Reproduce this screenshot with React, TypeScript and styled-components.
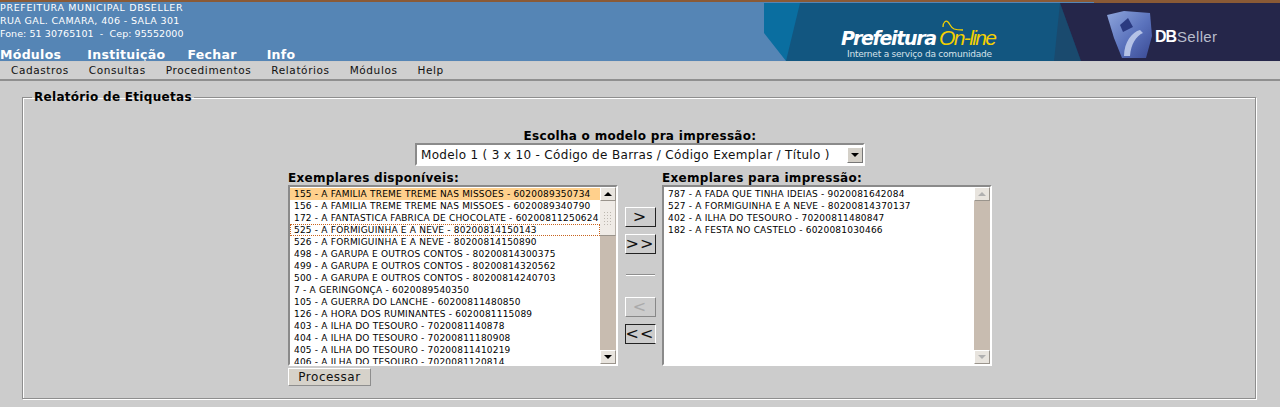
import React from 'react';
import styled, { createGlobalStyle } from 'styled-components';

const GlobalStyle = createGlobalStyle`
  html, body {
    margin: 0;
    padding: 0;
    background: #cccccc;
    font-family: "DejaVu Sans", Verdana, sans-serif;
    overflow: hidden;
  }
`;

const Page = styled.div`
  width: 1280px;
  height: 407px;
  overflow: hidden;
`;

const Header = styled.header`
  display: flex;
  justify-content: space-between;
  height: 61px;
  box-sizing: border-box;
  background: #5585b5;
  border-top: 2px solid #8a5a36;
  overflow: hidden;
`;

const Institution = styled.div`
  display: flex;
  flex-direction: column;
  margin-top: -1px;
`;

const InstitutionLine = styled.div<{ $spacing: number }>`
  color: #ffffff;
  font-size: 9.5px;
  line-height: 13px;
  letter-spacing: ${(p) => p.$spacing}px;
  white-space: pre;
`;

const MainNav = styled.nav`
  display: flex;
  gap: 25px;
  margin-top: 7px;
`;

const MainNavItem = styled.span<{ $extra?: number }>`
  margin-left: ${(p) => p.$extra ?? 0}px;
  color: #ffffff;
  font-size: 12.5px;
  font-weight: 700;
  line-height: 15px;
  letter-spacing: 0.3px;
`;

const Banner = styled.svg`
  display: block;
  flex: none;
  margin-top: -2px;
`;

const MenuBar = styled.nav`
  display: flex;
  gap: 20px;
  height: 16px;
  margin-top: 1px;
  padding: 0 0 1px 11px;
  background: #cfcfcf;
  border-bottom: 2px solid #8f8f8f;
  align-items: center;
`;

const MenuItem = styled.span`
  color: #111111;
  font-size: 10.5px;
  letter-spacing: 0.6px;
`;

const Content = styled.main`
  padding: 9px 24px 0 22px;
`;

const Frame = styled.fieldset`
  margin: 0;
  padding: 0;
  height: 309px;
  box-sizing: border-box;
  border: 1px solid #8e8e8e;
  box-shadow: inset 1px 1px 0 #ffffff, 1px 1px 0 #ffffff;
`;

const FrameTitle = styled.legend`
  margin-left: 9px;
  padding: 0 2px;
  color: #000000;
  font-size: 12px;
  font-weight: 700;
  letter-spacing: 0.3px;
`;

const Form = styled.form`
  display: flex;
  flex-direction: column;
  width: 704px;
  margin-left: 265px;
  padding-top: 25px;
`;

const ModelField = styled.div`
  display: flex;
  flex-direction: column;
  align-items: center;
`;

const FieldLabel = styled.label`
  color: #000000;
  font-size: 12px;
  font-weight: 700;
  line-height: 14px;
  letter-spacing: 0.3px;
`;

const ModelSelect = styled.div`
  display: flex;
  align-items: center;
  justify-content: space-between;
  width: 450px;
  height: 23px;
  box-sizing: border-box;
  padding: 0 0 0 4px;
  background: #ffffff;
  border: 2px solid #8a8a8a;
  border-right-color: #ffffff;
  border-bottom-color: #ffffff;
  color: #111111;
  font-size: 12px;
  letter-spacing: 0.33px;
`;

const ArrowButton = styled.span`
  display: flex;
  align-items: center;
  justify-content: center;
  width: 14px;
  height: 14px;
  background: #d4d0c8;
  border: 1px solid #777777;
  border-top-color: #ffffff;
  border-left-color: #ffffff;
`;

const ArrowDown = styled.i<{ $muted?: boolean }>`
  width: 0;
  height: 0;
  border-left: 4px solid transparent;
  border-right: 4px solid transparent;
  border-top: 4px solid ${(p) => (p.$muted ? '#b0b0b0' : '#000000')};
`;

const ArrowUp = styled.i<{ $muted?: boolean }>`
  width: 0;
  height: 0;
  border-left: 4px solid transparent;
  border-right: 4px solid transparent;
  border-bottom: 4px solid ${(p) => (p.$muted ? '#b0b0b0' : '#000000')};
`;

const Picker = styled.div`
  display: flex;
  margin-top: 5px;
`;

const ListColumn = styled.div`
  display: flex;
  flex-direction: column;
  width: 330px;
`;

const ListBox = styled.div`
  display: flex;
  height: 181px;
  box-sizing: border-box;
  background: #ffffff;
  border: 2px solid #8a8a8a;
  border-right-color: #ffffff;
  border-bottom-color: #ffffff;
  overflow: hidden;
`;

const Rows = styled.div`
  flex: 1;
  min-width: 0;
  padding-top: 1px;
  overflow: hidden;
`;

const Row = styled.div<{ $selected?: boolean; $focused?: boolean }>`
  height: 12px;
  box-sizing: border-box;
  padding-left: 4px;
  color: #000000;
  font-size: 9px;
  line-height: 12px;
  letter-spacing: 0.2px;
  white-space: nowrap;
  background: ${(p) => (p.$selected ? '#ffd08c' : 'transparent')};
  outline: ${(p) => (p.$focused ? '1px dotted #c8641e' : 'none')};
  outline-offset: -1px;
`;

const ScrollBar = styled.div`
  display: flex;
  flex-direction: column;
  flex: none;
  width: 16px;
  background: #c8bcb0;
`;

const ScrollButton = styled.div`
  display: flex;
  align-items: center;
  justify-content: center;
  height: 14px;
  box-sizing: border-box;
  background: #e8e4de;
  border: 1px solid #9a948c;
  border-top-color: #ffffff;
  border-left-color: #ffffff;
`;

const ScrollThumb = styled.div`
  display: flex;
  align-items: center;
  justify-content: center;
  height: 35px;
  box-sizing: border-box;
  background: #efebe6;
  border-bottom: 1px solid #9a948c;
  border-right: 1px solid #b8b2aa;
`;

const ThumbGrip = styled.div`
  width: 9px;
  height: 15px;
  background-image: radial-gradient(circle, #bdb8b0 1px, transparent 1px);
  background-size: 3px 3px;
`;

const ScrollTrack = styled.div`
  flex: 1;
`;

const Movers = styled.div`
  display: flex;
  flex-direction: column;
  align-items: center;
  width: 44px;
  padding-top: 36px;
`;

const MoveButton = styled.button<{ $top?: number; $pressed?: boolean }>`
  display: block;
  width: 31px;
  height: 20px;
  margin-top: ${(p) => p.$top ?? 0}px;
  padding: 0;
  background: #cccccc;
  border: 1px solid #222222;
  border-top-color: ${(p) => (p.$pressed ? '#222222' : '#ffffff')};
  border-left-color: ${(p) => (p.$pressed ? '#222222' : '#ffffff')};
  border-right-color: ${(p) => (p.$pressed ? '#ffffff' : '#222222')};
  color: #111111;
  font-family: inherit;
  font-size: 16px;
  line-height: 16px;
  letter-spacing: 1px;
  &:disabled {
    color: #aaaaaa;
    border-color: #ffffff #888888 #888888 #ffffff;
  }
`;

const MoverRule = styled.hr`
  width: 29px;
  height: 1px;
  margin: 20px 0 0;
  border: 0;
  background: #8e8e8e;
  box-shadow: 0 1px 0 #ffffff;
`;

const SubmitButton = styled.button`
  width: 83px;
  height: 18px;
  margin-top: 2px;
  padding: 0;
  background: #d6d2ca;
  border: 1px solid #8e8e8e;
  border-top-color: #ffffff;
  border-left-color: #ffffff;
  color: #111111;
  font-family: inherit;
  font-size: 12px;
  letter-spacing: 0.5px;
`;

const available = [
  '155 - A FAMILIA TREME TREME NAS MISSOES - 6020089350734',
  '156 - A FAMILIA TREME TREME NAS MISSOES - 6020089340790',
  '172 - A FANTASTICA FABRICA DE CHOCOLATE - 60200811250624',
  '525 - A FORMIGUINHA E A NEVE - 80200814150143',
  '526 - A FORMIGUINHA E A NEVE - 80200814150890',
  '498 - A GARUPA E OUTROS CONTOS - 80200814300375',
  '499 - A GARUPA E OUTROS CONTOS - 80200814320562',
  '500 - A GARUPA E OUTROS CONTOS - 80200814240703',
  '7 - A GERINGONÇA - 6020089540350',
  '105 - A GUERRA DO LANCHE - 60200811480850',
  '126 - A HORA DOS RUMINANTES - 6020081115089',
  '403 - A ILHA DO TESOURO - 7020081140878',
  '404 - A ILHA DO TESOURO - 70200811180908',
  '405 - A ILHA DO TESOURO - 70200811410219',
  '406 - A ILHA DO TESOURO - 7020081120814',
];

const chosen = [
  '787 - A FADA QUE TINHA IDEIAS - 9020081642084',
  '527 - A FORMIGUINHA E A NEVE - 80200814370137',
  '402 - A ILHA DO TESOURO - 70200811480847',
  '182 - A FESTA NO CASTELO - 6020081030466',
];

const BannerArt = () => (
  <Banner width={516} height={61} viewBox="0 0 516 61">
    <defs>
      <linearGradient id="dbCube" x1="0" y1="0" x2="1" y2="1">
        <stop offset="0" stopColor="#8fa6dc" />
        <stop offset="0.55" stopColor="#5a72bc" />
        <stop offset="1" stopColor="#3a4a94" />
      </linearGradient>
    </defs>
    <rect x="0" y="0" width="516" height="61" fill="#125680" />
    <polygon points="0,3 36,3 22,61 0,61" fill="#0a6ea0" />
    <polygon points="0,3 0,33 22,61 0,61" fill="#5585b5" />
    <polygon points="296,3 290,61 317,61" fill="#1a4a6e" />
    <polygon points="296,3 516,3 516,61 317,61" fill="#25264a" />
    <rect x="0" y="0" width="330" height="3" fill="#5585b5" />
    <rect x="330" y="0" width="186" height="3" fill="#8a5a36" />
    <text x="77" y="45" fontFamily="'DejaVu Sans', sans-serif" fontSize="19" fontWeight="700" fontStyle="italic" fill="#ffffff" textLength="96">
      Prefeitura
    </text>
    <text x="175" y="45" fontFamily="'Liberation Sans', sans-serif" fontSize="21" fontStyle="italic" fill="#f4d000" textLength="58">
      On-line
    </text>
    <path d="M179 27 c0 -5 3 -7 5 -5 c2 2 3 6 6 7 c3 1 6 1 9 1" fill="none" stroke="#f4d000" strokeWidth="1.3" />
    <text x="83" y="57" fontFamily="'DejaVu Sans', sans-serif" fontSize="9" fill="#d6e2ea" textLength="145">
      Internet a serviço da comunidade
    </text>
    <polygon points="343,15 360,11 386,13 388,36 382,58 358,58 350,38" fill="url(#dbCube)" />
    <polygon points="356,25 364,18 369,27 359,32" fill="#2a3a80" />
    <path d="M360 56 c0 -14 8 -24 16 -26 l3 3 c-7 3 -12 11 -13 23 z" fill="#b4c2e6" />
    <text x="391" y="42" fontFamily="'Liberation Sans', sans-serif" fontSize="16" fontWeight="700" fill="#ffffff" textLength="22">
      DB
    </text>
    <text x="413" y="42" fontFamily="'Liberation Sans', sans-serif" fontSize="15" fill="#b8bccc" textLength="40">
      Seller
    </text>
  </Banner>
);

const App = (): JSX.Element => {
  return (
    <Page>
      <GlobalStyle />
      <Header>
        <Institution>
          <InstitutionLine $spacing={0.65}>PREFEITURA MUNICIPAL DBSELLER</InstitutionLine>
          <InstitutionLine $spacing={0.37}>RUA GAL. CAMARA, 406 - SALA 301</InstitutionLine>
          <InstitutionLine $spacing={0.07}>{'Fone: 51 30765101  -  Cep: 95552000'}</InstitutionLine>
          <MainNav>
            <MainNavItem>Módulos</MainNavItem>
            <MainNavItem $extra={1}>Instituição</MainNavItem>
            <MainNavItem $extra={-3}>Fechar</MainNavItem>
            <MainNavItem $extra={5}>Info</MainNavItem>
          </MainNav>
        </Institution>
        <BannerArt />
      </Header>
      <MenuBar>
        <MenuItem>Cadastros</MenuItem>
        <MenuItem>Consultas</MenuItem>
        <MenuItem>Procedimentos</MenuItem>
        <MenuItem>Relatórios</MenuItem>
        <MenuItem>Módulos</MenuItem>
        <MenuItem>Help</MenuItem>
      </MenuBar>
      <Content>
        <Frame>
          <FrameTitle>Relatório de Etiquetas</FrameTitle>
          <Form>
            <ModelField>
              <FieldLabel>Escolha o modelo pra impressão:</FieldLabel>
              <ModelSelect>
                Modelo 1 ( 3 x 10 - Código de Barras / Código Exemplar / Título )
                <ArrowButton>
                  <ArrowDown />
                </ArrowButton>
              </ModelSelect>
            </ModelField>
            <Picker>
              <ListColumn>
                <FieldLabel>Exemplares disponíveis:</FieldLabel>
                <ListBox>
                  <Rows>
                    {available.map((item, index) => (
                      <Row key={item} $selected={index === 0} $focused={index === 3}>
                        {item}
                      </Row>
                    ))}
                  </Rows>
                  <ScrollBar>
                    <ScrollButton>
                      <ArrowUp />
                    </ScrollButton>
                    <ScrollThumb>
                      <ThumbGrip />
                    </ScrollThumb>
                    <ScrollTrack />
                    <ScrollButton>
                      <ArrowDown />
                    </ScrollButton>
                  </ScrollBar>
                </ListBox>
                <SubmitButton type="button">Processar</SubmitButton>
              </ListColumn>
              <Movers>
                <MoveButton type="button">&gt;</MoveButton>
                <MoveButton type="button" $top={7}>&gt;&gt;</MoveButton>
                <MoverRule />
                <MoveButton type="button" $top={22} disabled>&lt;</MoveButton>
                <MoveButton type="button" $top={7} $pressed>&lt;&lt;</MoveButton>
              </Movers>
              <ListColumn>
                <FieldLabel>Exemplares para impressão:</FieldLabel>
                <ListBox>
                  <Rows>
                    {chosen.map((item) => (
                      <Row key={item}>{item}</Row>
                    ))}
                  </Rows>
                  <ScrollBar>
                    <ScrollButton>
                      <ArrowUp $muted />
                    </ScrollButton>
                    <ScrollTrack />
                    <ScrollButton>
                      <ArrowDown $muted />
                    </ScrollButton>
                  </ScrollBar>
                </ListBox>
              </ListColumn>
            </Picker>
          </Form>
        </Frame>
      </Content>
    </Page>
  );
};

export default App;
